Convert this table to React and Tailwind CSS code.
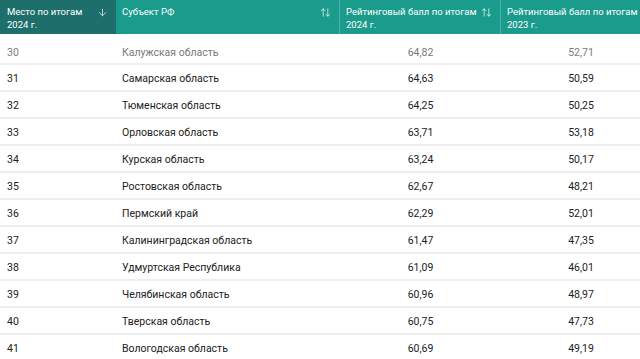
import React from "react";
import { ArrowDown, ArrowUpDown } from "lucide-react";

const rows = [
  ["30", "Калужская область", "64,82", "52,71"],
  ["31", "Самарская область", "64,63", "50,59"],
  ["32", "Тюменская область", "64,25", "50,25"],
  ["33", "Орловская область", "63,71", "53,18"],
  ["34", "Курская область", "63,24", "50,17"],
  ["35", "Ростовская область", "62,67", "48,21"],
  ["36", "Пермский край", "62,29", "52,01"],
  ["37", "Калининградская область", "61,47", "47,35"],
  ["38", "Удмуртская Республика", "61,09", "46,01"],
  ["39", "Челябинская область", "60,96", "48,97"],
  ["40", "Тверская область", "60,75", "47,73"],
  ["41", "Вологодская область", "60,69", "49,19"],
];

const cols = "grid grid-cols-[116px_224px_161px_160px]";

const App = () => {
  return (
    <div className="w-[640px] h-[359px] overflow-hidden bg-white font-['Roboto',sans-serif]">
      <div className="w-[661px]">
        <div className={`${cols} h-[34px] text-white text-[9.5px] leading-[13px] whitespace-nowrap`}>
          <div className="bg-[#1e6f6b] flex justify-between pl-[7px] pr-[8px] pt-[5px]">
            <span>Место по итогам<br />2024 г.</span>
            <ArrowDown size={11} strokeWidth={1.5} className="mt-[2px]" />
          </div>
          <div className="bg-[#1a9b8b] flex justify-between pl-[6px] pr-[8px] pt-[5px] border-r border-[#4db5a8]">
            <span>Субъект РФ</span>
            <ArrowUpDown size={11} strokeWidth={1.5} className="mt-[2px]" />
          </div>
          <div className="bg-[#1a9b8b] flex justify-between pl-[6px] pr-[8px] pt-[5px] border-r border-[#4db5a8]">
            <span>Рейтинговый балл по итогам<br />2024 г.</span>
            <ArrowUpDown size={11} strokeWidth={1.5} className="mt-[2px]" />
          </div>
          <div className="bg-[#1a9b8b] flex justify-between pl-[6px] pr-[8px] pt-[5px]">
            <span>Рейтинговый балл по итогам<br />2023 г.</span>
            <ArrowUpDown size={11} strokeWidth={1.5} className="mt-[2px]" />
          </div>
        </div>
        {rows.map((r, i) => (
          <div
            key={r[0]}
            className={`${cols} items-center border-b-2 border-[#eeeeee] text-[10.5px] ${i === 0 ? "h-[31px] pt-[8px] text-[#7a7a7a]" : "h-[27px] pt-[2px] text-[#212121]"}`}
          >
            <div className="pl-[7px]">{r[0]}</div>
            <div className="pl-[6px]">{r[1]}</div>
            <div className="text-center">{r[2]}</div>
            <div className="text-center">{r[3]}</div>
          </div>
        ))}
      </div>
    </div>
  );
};

export default App;
